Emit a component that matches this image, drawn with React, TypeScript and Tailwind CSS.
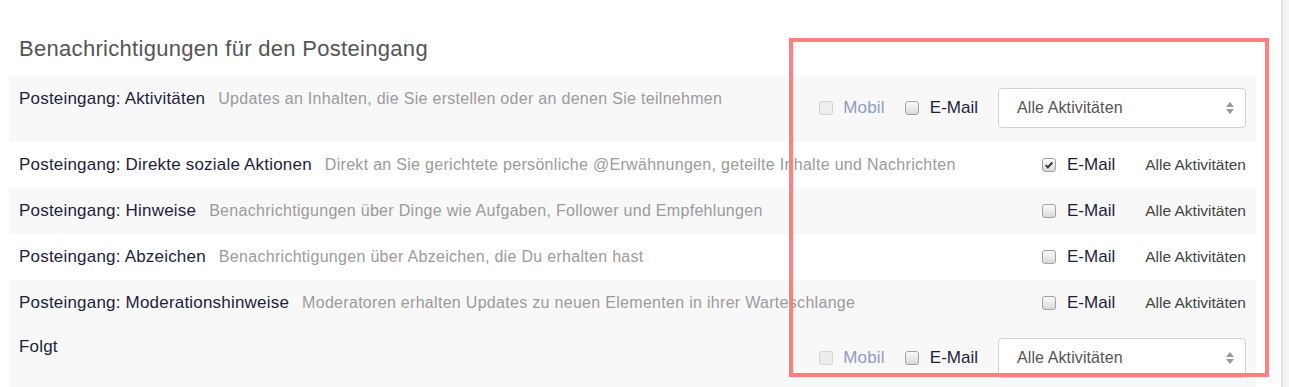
type Row = { title: string; desc?: string; checked?: boolean }

const rows: Row[] = [
  { title: 'Posteingang: Direkte soziale Aktionen', desc: 'Direkt an Sie gerichtete persönliche @Erwähnungen, geteilte Inhalte und Nachrichten', checked: true },
  { title: 'Posteingang: Hinweise', desc: 'Benachrichtigungen über Dinge wie Aufgaben, Follower und Empfehlungen' },
  { title: 'Posteingang: Abzeichen', desc: 'Benachrichtigungen über Abzeichen, die Du erhalten hast' },
  { title: 'Posteingang: Moderationshinweise', desc: 'Moderatoren erhalten Updates zu neuen Elementen in ihrer Warteschlange' },
]

function Box({ checked, disabled }: { checked?: boolean; disabled?: boolean }) {
  return (
    <span
      className={
        disabled
          ? 'flex h-[14px] w-[14px] shrink-0 items-center justify-center rounded-[3px] border border-[#d4d4d4] bg-[#eeeeee]'
          : 'flex h-[14px] w-[14px] shrink-0 items-center justify-center rounded-[3px] border border-[#a2a2a2] bg-gradient-to-b from-[#fbfbfb] to-[#dadada]'
      }
    >
      {checked && (
        <svg viewBox="0 0 12 12" className="h-[10px] w-[10px]">
          <path d="M2 6.2l2.6 2.7L10 3" fill="none" stroke="#333" strokeWidth="2.3" />
        </svg>
      )}
    </span>
  )
}

function Arrows() {
  return (
    <svg viewBox="0 0 10 16" className="h-[16px] w-[10px]">
      <path d="M1 7h8L5 2z" fill="#9a9a9a" />
      <path d="M1 9h8l-4 5z" fill="#9a9a9a" />
    </svg>
  )
}

function Controls() {
  return (
    <div className="flex items-center">
      <Box disabled />
      <span className="ml-[10px] text-[17px] tracking-[0.2px] text-[#8f9cc6]">Mobil</span>
      <span className="ml-[20px]">
        <Box />
      </span>
      <span className="ml-[11px] text-[17px] text-[#1e1e3c]">E-Mail</span>
      <div className="ml-[20px] flex h-[40px] w-[248px] items-center justify-between rounded-[4px] border border-[#d2d2d2] bg-white pl-[18px] pr-[10px] text-[16px] tracking-[0.1px] text-[#555]">
        <span>Alle Aktivitäten</span>
        <Arrows />
      </div>
    </div>
  )
}

export default function App() {
  return (
    <div className="relative flex h-[387px] w-full overflow-hidden bg-white font-['Liberation_Sans',Arial,sans-serif]">
      <div className="flex-1 pl-[9px] pr-[25px]">
        <h2 className="pl-[10px] pt-[35px] pb-[13px] text-[22px] leading-[28px] tracking-[0.3px] text-[#555]">
          Benachrichtigungen für den Posteingang
        </h2>

        <div className="flex items-start justify-between bg-[#f8f8f8] pl-[10px] pr-[10px]">
          <div className="pt-[12px] leading-[22px]">
            <span className="text-[17px] tracking-[0.2px] text-[#1e1e3c]">Posteingang: Aktivitäten</span>
            <span className="ml-[13px] text-[16px] tracking-[0.3px] text-[#9b9b9b]">Updates an Inhalten, die Sie erstellen oder an denen Sie teilnehmen</span>
          </div>
          <div className="pt-[12px] pb-[14px]">
            <Controls />
          </div>
        </div>

        {rows.map((r, i) => (
          <div
            key={r.title}
            className={
              i % 2 === 1
                ? 'flex h-[46px] items-center justify-between bg-[#f8f8f8] pl-[10px] pr-[10px]'
                : 'flex h-[46px] items-center justify-between bg-white pl-[10px] pr-[10px]'
            }
          >
            <div>
              <span className="text-[17px] tracking-[0.2px] text-[#1e1e3c]">{r.title}</span>
              <span className="ml-[13px] text-[16px] tracking-[0.3px] text-[#9b9b9b]">{r.desc}</span>
            </div>
            <div className="flex items-center">
              <Box checked={r.checked} />
              <span className="ml-[11px] text-[17px] text-[#1e1e3c]">E-Mail</span>
              <span className="ml-[30px] text-[15.5px] text-[#444]">Alle Aktivitäten</span>
            </div>
          </div>
        ))}

        <div className="flex h-[70px] items-start justify-between bg-[#f8f8f8] pl-[10px] pr-[10px]">
          <div className="pt-[10px] text-[17px] leading-[22px] tracking-[0.2px] text-[#1e1e3c]">Folgt</div>
          <div className="pt-[12px]">
            <Controls />
          </div>
        </div>
      </div>

      <div className="w-[8px] border-l-2 border-[#e3e3e6] bg-[#f4f4f6]" />

      <div className="pointer-events-none absolute left-[789px] top-[38px] h-[339px] w-[480px] border-4 border-[#ff7f7f]" />
    </div>
  )
}
